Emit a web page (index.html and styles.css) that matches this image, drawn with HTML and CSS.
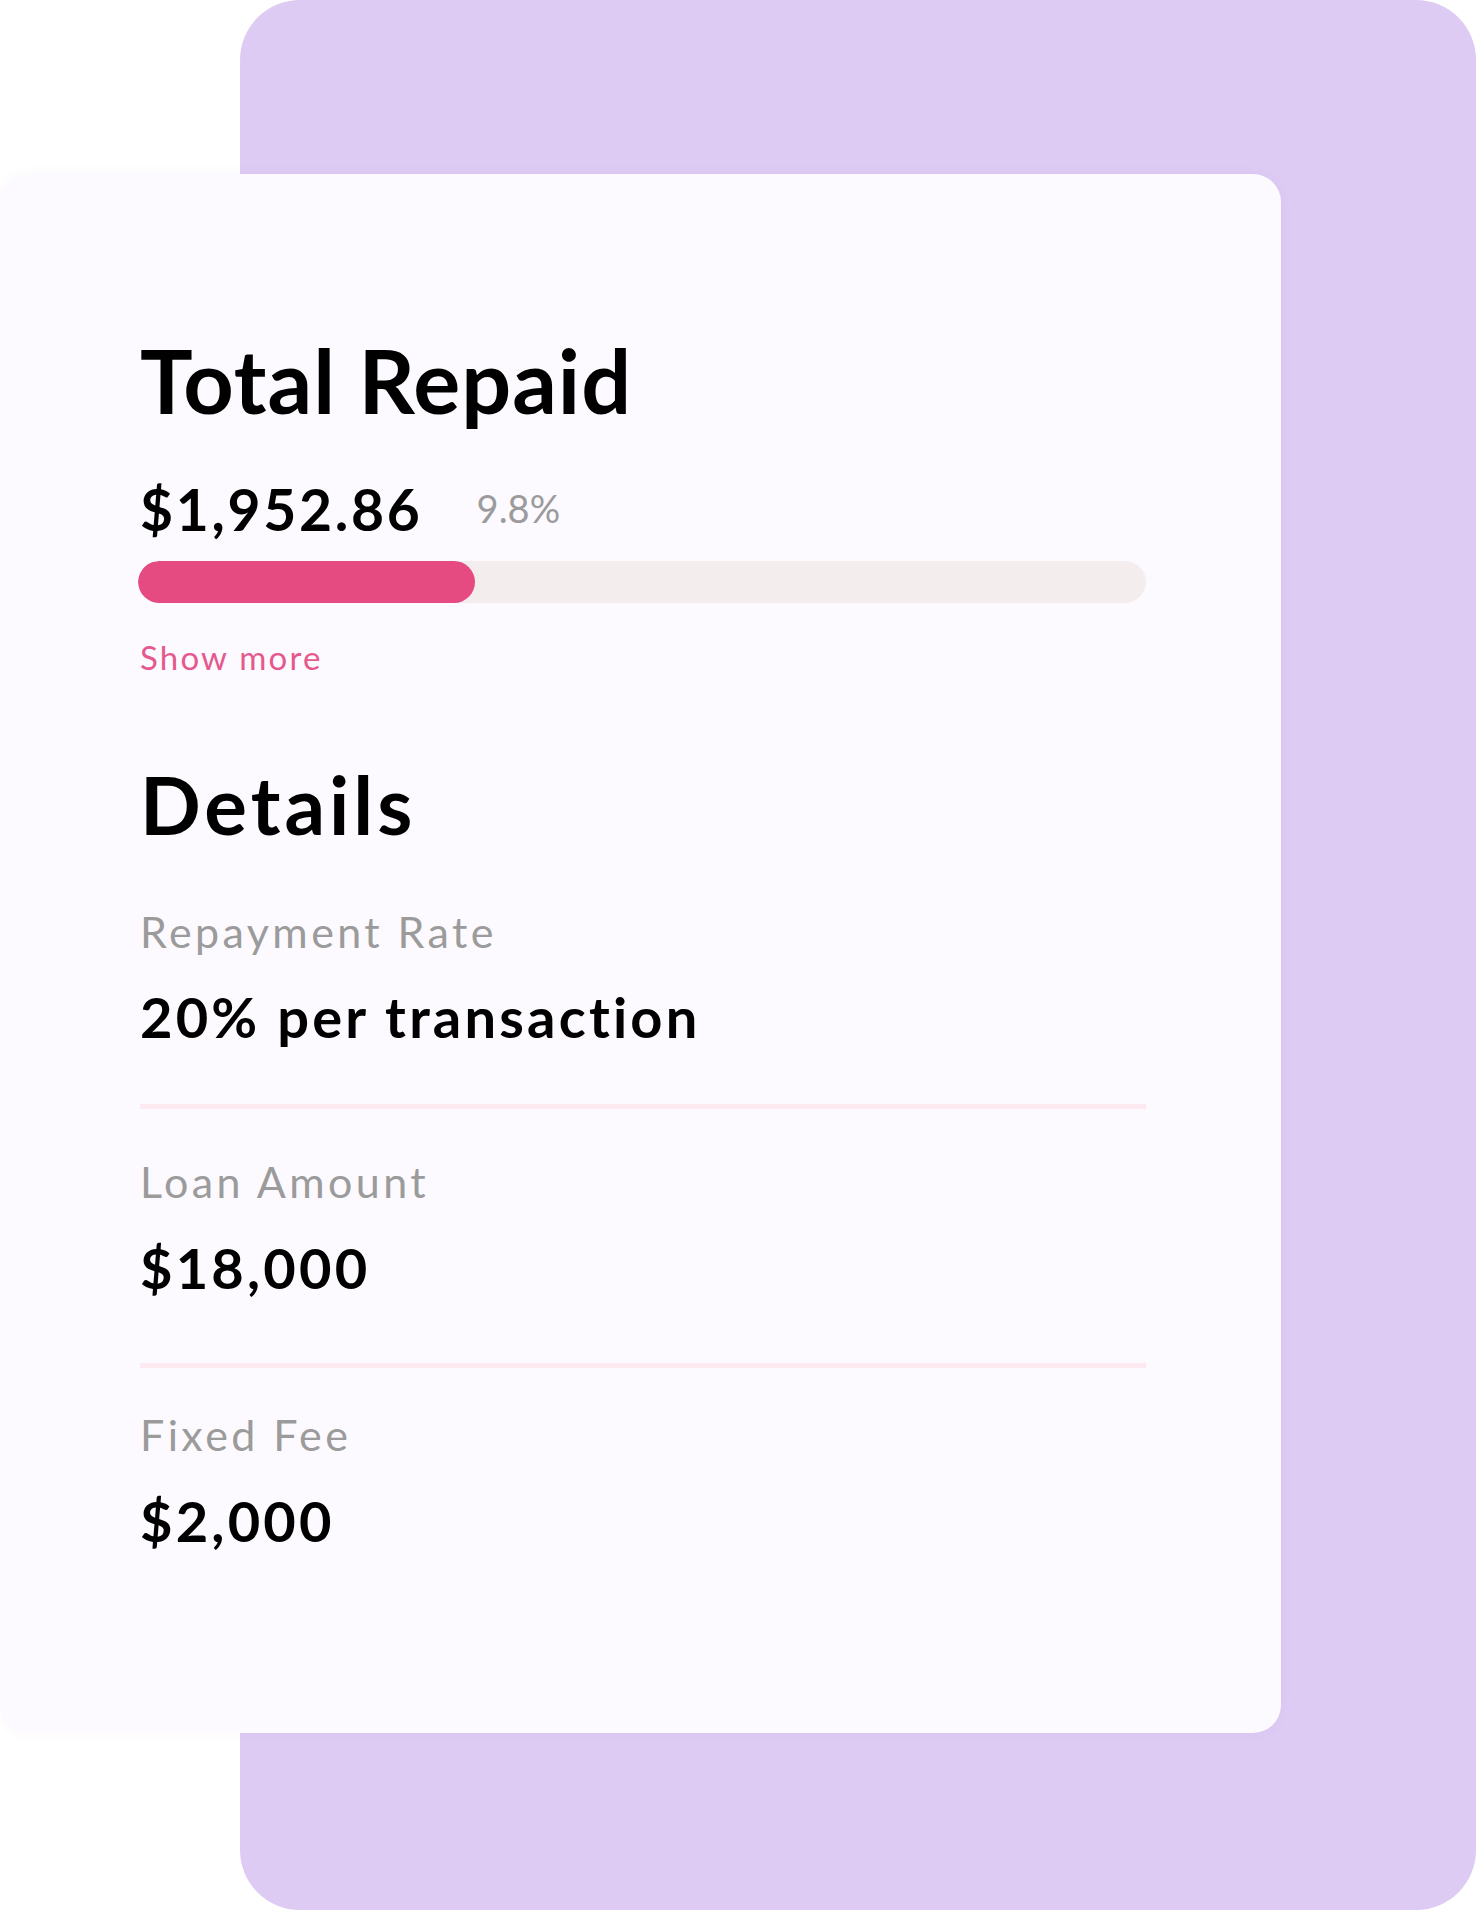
FILE: index.html
```html
<!DOCTYPE html>
<html lang="en">
<head>
<meta charset="utf-8">
<title>Total Repaid</title>
<link rel="stylesheet" href="styles.css">
</head>
<body>
<div class="stage">
  <div class="backdrop"></div>
  <section class="card">
    <h1 class="title">Total Repaid</h1>
    <div class="amount-row">
      <span class="amount">$1,952.86</span>
      <span class="percent">9.8%</span>
    </div>
    <div class="track"><div class="fill" style="width: 33.4%"></div></div>
    <a class="more" href="#">Show more</a>
    <h2 class="title details-title">Details</h2>
    <div class="item">
      <div class="label">Repayment Rate</div>
      <div class="value">20% per transaction</div>
    </div>
    <div class="divider"></div>
    <div class="item">
      <div class="label">Loan Amount</div>
      <div class="value">$18,000</div>
    </div>
    <div class="divider divider-second"></div>
    <div class="item">
      <div class="label">Fixed Fee</div>
      <div class="value">$2,000</div>
    </div>
  </section>
</div>
</body>
</html>
```
FILE: styles.css
```css
* { box-sizing: border-box; }
html, body {
  margin: 0;
  padding: 0;
  background: #ffffff;
}
body {
  font-family: Lato, "Noto Sans", "Liberation Sans", sans-serif;
  color: #000;
}
.stage {
  width: 1476px;
  height: 1910px;
  display: grid;
  grid-template-columns: 1476px;
  grid-template-rows: 1910px;
  overflow: hidden;
}
.backdrop, .card {
  grid-area: 1 / 1;
}
.backdrop {
  margin-left: 240px;
  width: 1236px;
  height: 1910px;
  background: #ddcbf4;
  border-radius: 60px;
}
.card {
  margin-top: 174px;
  width: 1281px;
  height: 1559px;
  background: #fcfaff;
  border-radius: 28px;
  box-shadow: 0 0 14px rgba(120, 100, 150, 0.04);
  padding: 154px 135px 0 140px;
  display: flex;
  flex-direction: column;
}
.title {
  margin: 0;
  font-size: 88px;
  line-height: 1.2;
  font-weight: 700;
  letter-spacing: 1px;
}
.amount-row {
  margin-top: 41px;
  display: flex;
  align-items: center;
  gap: 54px;
}
.amount {
  font-size: 57px;
  line-height: 1.2;
  font-weight: 700;
  letter-spacing: 2.7px;
}
.percent {
  font-size: 38px;
  line-height: 1.2;
  color: #9b9b9b;
}
.track {
  margin-top: 18px;
  height: 42px;
  border-radius: 21px;
  background: #f3eded;
  overflow: hidden;
  margin-left: -2px;
}
.fill {
  height: 100%;
  border-radius: 21px;
  background: #e54a80;
}
.more {
  margin-top: 35px;
  font-size: 33px;
  line-height: 1.2;
  color: #e5598e;
  text-decoration: none;
  letter-spacing: 2.2px;
  align-self: flex-start;
}
.details-title {
  margin-top: 78px;
  font-size: 80px;
  letter-spacing: 4px;
}
.item {
  display: flex;
  flex-direction: column;
}
.details-title + .item {
  margin-top: 54px;
}
.label {
  font-size: 43px;
  line-height: 1.2;
  color: #9b9b9b;
  letter-spacing: 3.4px;
}
.value {
  margin-top: 26px;
  font-size: 56px;
  line-height: 1.2;
  font-weight: 700;
  letter-spacing: 3.2px;
}
.divider {
  height: 5px;
  background: #fdeaf0;
  margin: 54px 0 47px;
}
.divider-second {
  margin: 62px 0 41px;
}
```
